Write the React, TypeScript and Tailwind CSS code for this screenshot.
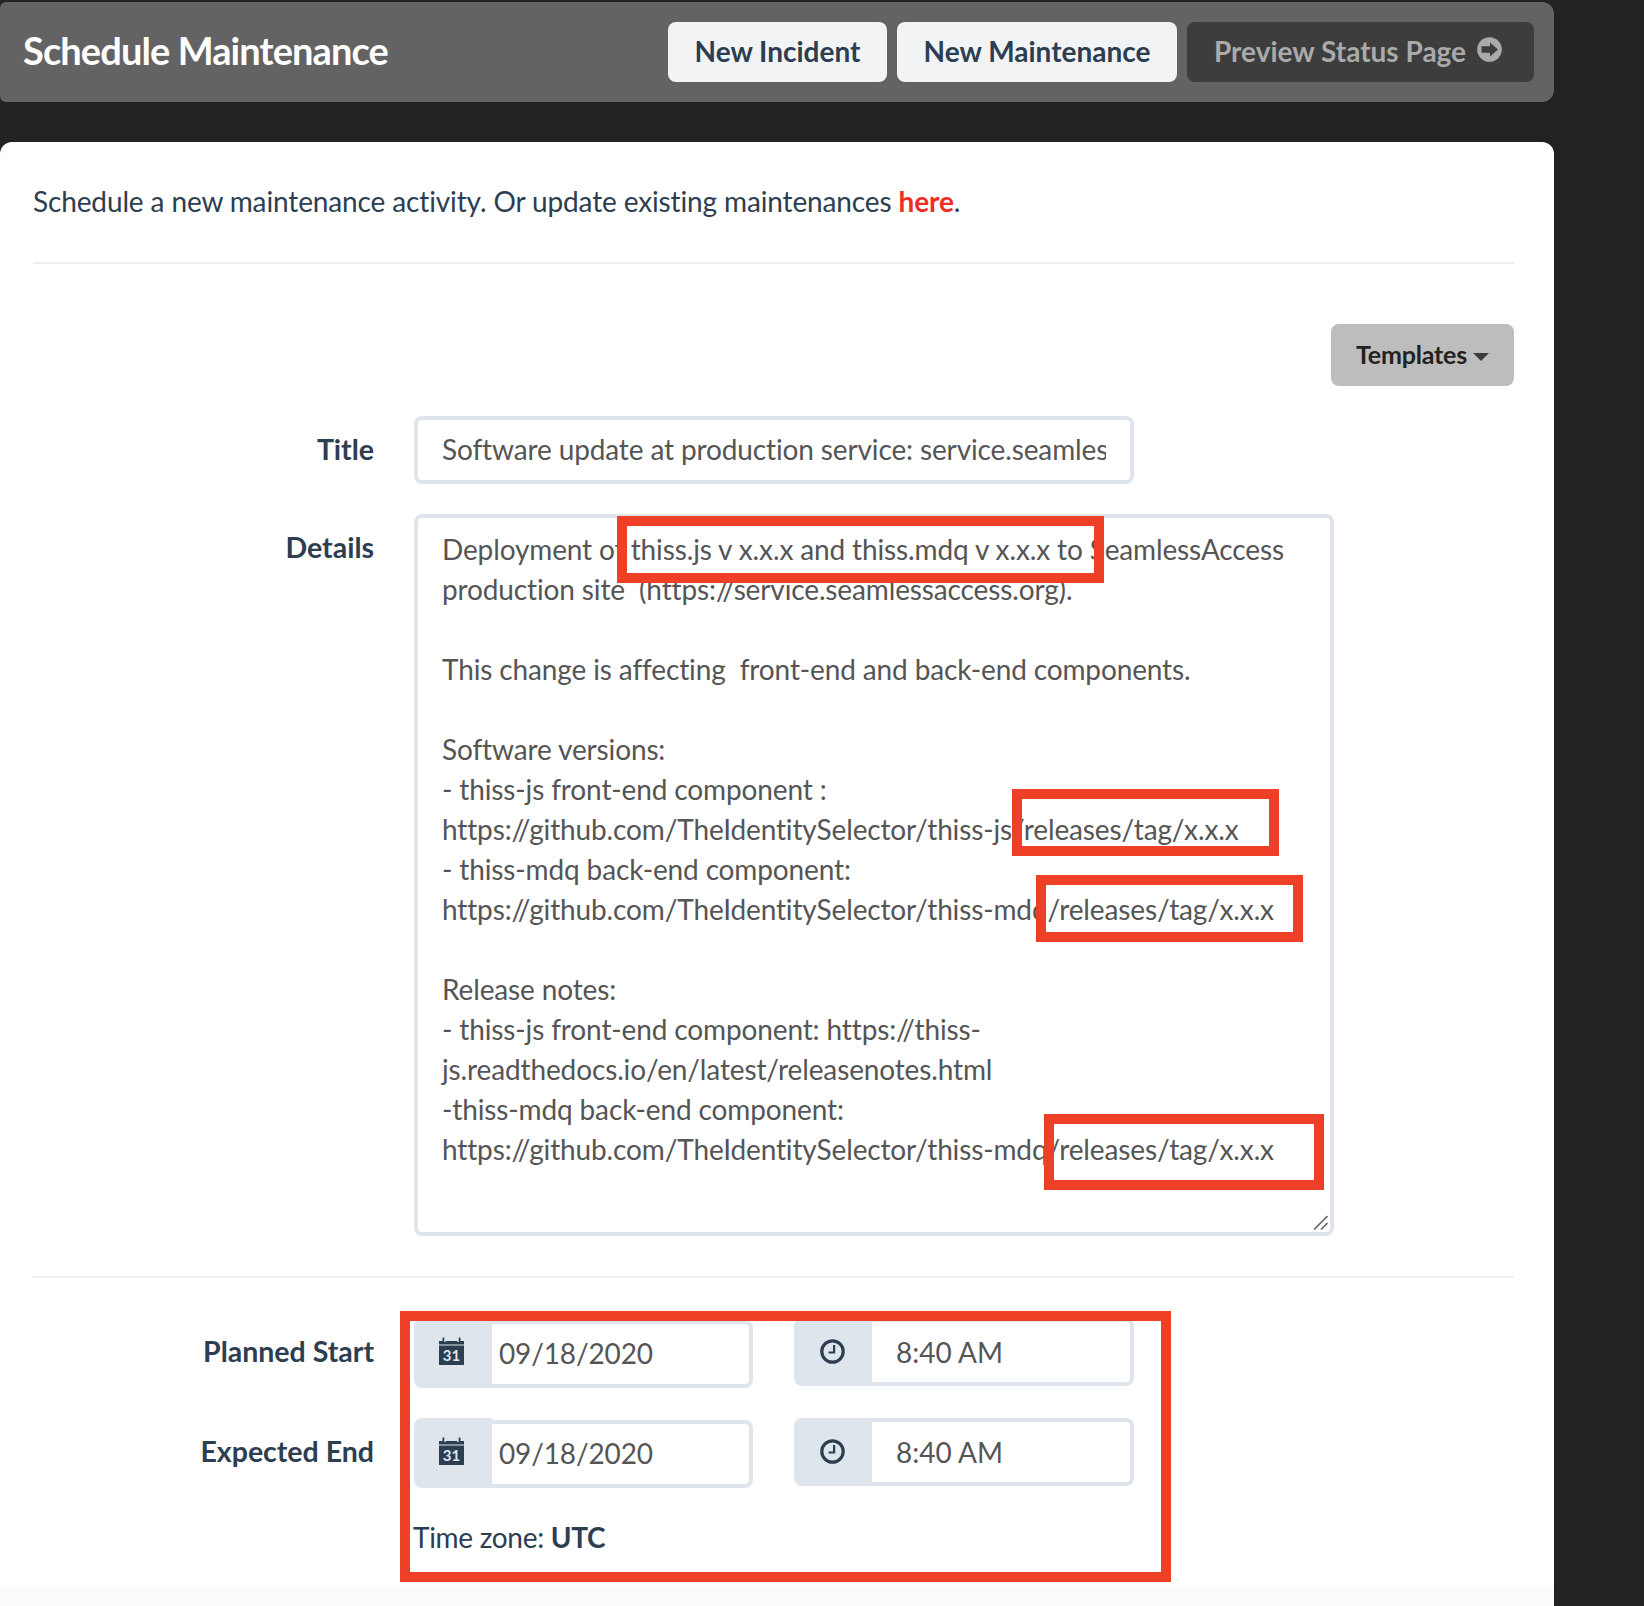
const lato = "font-['Lato','Noto_Sans',sans-serif]";

const details = `Deployment of thiss.js v x.x.x and thiss.mdq v x.x.x to SeamlessAccess production site  (https://service.seamlessaccess.org).

This change is affecting  front-end and back-end components.

Software versions:
- thiss-js front-end component :
https://github.com/TheIdentitySelector/thiss-js/releases/tag/x.x.x
- thiss-mdq back-end component:
https://github.com/TheIdentitySelector/thiss-mdq/releases/tag/x.x.x

Release notes:
- thiss-js front-end component: https://thiss-js.readthedocs.io/en/latest/releasenotes.html
-thiss-mdq back-end component:
https://github.com/TheIdentitySelector/thiss-mdq/releases/tag/x.x.x`;

function CalendarIcon() {
  return (
    <svg width="25" height="28" viewBox="0 0 25 28" aria-hidden="true">
      <path d="M0 4h3.5V0.5h1.8V5h1.4V4h11.6v1h1.4V0.5h1.8V4H25v3.5H0z" fill="#2c3e50" />
      <rect x="0" y="8.5" width="25" height="19.5" fill="#2c3e50" />
      <text x="12.5" y="24" textAnchor="middle" fontSize="15" fontWeight="700" fill="#dee5ed" fontFamily="Lato, sans-serif">31</text>
    </svg>
  );
}

function ClockIcon() {
  return (
    <svg width="25" height="25" viewBox="0 0 25 25" aria-hidden="true">
      <circle cx="12.5" cy="12.5" r="10.7" fill="none" stroke="#2c3e50" strokeWidth="3.2" />
      <path d="M13 6h2.2v8.6H8.6v-2.2H13z" fill="#2c3e50" />
    </svg>
  );
}

function ArrowCircleIcon() {
  return (
    <svg width="25" height="25" viewBox="0 0 25 25" aria-hidden="true">
      <circle cx="12.5" cy="12.5" r="12.3" fill="#aaaaaa" />
      <path d="M4.5 9.2H13V5.5l8 7-8 7v-3.7H4.5z" fill="#3d3d3d" />
    </svg>
  );
}

function DateGroup({ value }: { value: string }) {
  return (
    <div className="flex w-[339px] h-[68px]">
      <div className="w-[78px] h-[70px] self-end shrink-0 flex justify-center pt-[19px] pr-[3px] bg-[#dee5ed] rounded-l-[8px]">
        <CalendarIcon />
      </div>
      <input
        readOnly
        defaultValue={value}
        className="min-w-0 flex-1 h-full pl-[7px] pb-[2px] bg-white border-[4px] border-l-0 border-[#dee5ed] rounded-r-[8px] text-[28px] tracking-[-0.13px] text-[#555555] outline-none"
      />
    </div>
  );
}

function TimeGroup({ value }: { value: string }) {
  return (
    <div className="flex w-[340px] h-[68px] ml-[41px] -mt-[2px]">
      <div className="w-[78px] shrink-0 flex justify-center pt-[21px] pr-[2px] bg-[#dee5ed] rounded-l-[8px]">
        <ClockIcon />
      </div>
      <input
        readOnly
        defaultValue={value}
        className="min-w-0 flex-1 h-full pl-[24px] pb-[1px] bg-white border-[4px] border-l-0 border-[#dee5ed] rounded-r-[8px] text-[28px] text-[#555555] outline-none"
      />
    </div>
  );
}

function RedBox({ className }: { className: string }) {
  return <div className={`absolute border-[10px] border-[#ee4026] pointer-events-none ${className}`} />;
}

export default function App() {
  return (
    <div className={`${lato} relative w-[1644px] h-[1606px] overflow-hidden bg-[#222222] text-[#2c3e50]`}>
      <div className="w-[1554px] pt-[2px]">
        <header className="h-[100px] bg-[#636363] rounded-r-[12px] rounded-l-[6px] flex items-center justify-between pl-[23px] pr-[20px]">
          <h1 className="pb-[4px] text-[38px] leading-[48px] font-bold tracking-[-0.9px] text-white">Schedule Maintenance</h1>
          <div className="flex gap-[10px]">
            <button className="h-[60px] w-[219px] pb-[2px] bg-[#f1f3f5] rounded-[8px] text-[28px] font-bold text-[#2c3e50]">New Incident</button>
            <button className="h-[60px] w-[280px] pb-[2px] bg-[#f1f3f5] rounded-[8px] text-[28px] font-bold text-[#2c3e50]">New Maintenance</button>
            <button className="h-[60px] w-[347px] pb-[2px] pr-[5px] bg-[#3d3d3d] rounded-[8px] text-[28px] font-bold text-[#aaaaaa] flex items-center justify-center gap-[11px]">
              Preview Status Page
              <span className="mb-[4px]"><ArrowCircleIcon /></span>
            </button>
          </div>
        </header>

        <main className="mt-[40px] bg-white rounded-t-[12px] pl-[33px] pr-[40px] pt-[39px]">
          <p className="text-[28px] tracking-[-0.13px] leading-[40px]">
            Schedule a new maintenance activity. Or update existing maintenances{' '}
            <a className="font-bold text-[#ee2e24]">here</a>.
          </p>
          <hr className="mt-[41px] border-0 h-[2px] bg-[#eeeeee]" />

          <div className="mt-[60px] flex justify-end">
            <button className="h-[62px] w-[183px] bg-[#bdbdbd] rounded-[8px] text-[25px] tracking-[-0.2px] font-bold text-[#222222] flex items-center justify-center gap-[6px]">
              Templates
              <span className="mt-[3px] border-x-[8px] border-x-transparent border-t-[8px] border-t-[#3d3d3d]" />
            </button>
          </div>

          <div className="mt-[30px] flex">
            <label className="w-[341px] shrink-0 text-right text-[28.5px] font-bold leading-[66px]">Title</label>
            <input
              readOnly
              defaultValue="Software update at production service: service.seamlessaccess.org"
              className="ml-[40px] w-[720px] h-[68px] px-[24px] pb-[2px] bg-white border-[4px] border-[#dee5ed] rounded-[8px] text-[28px] tracking-[-0.13px] text-[#555555] outline-none"
            />
          </div>

          <div className="mt-[30px] flex">
            <label className="w-[341px] shrink-0 text-right text-[28.5px] font-bold leading-[40px] pt-[13px]">Details</label>
            <div className="relative ml-[40px] w-[920px] h-[722px]">
              <textarea
                readOnly
                defaultValue={details}
                className="block w-full h-full px-[24px] pt-[11px] resize-none overflow-hidden bg-white border-[4px] border-[#dee5ed] rounded-[8px] text-[28px] tracking-[-0.13px] leading-[40px] text-[#555555] outline-none"
              />
              <svg className="absolute right-[6px] bottom-[6px]" width="15" height="15" viewBox="0 0 15 15" aria-hidden="true">
                <path d="M1 14.5L14.5 1M8 14.5L14.5 8" stroke="#666666" strokeWidth="1.6" fill="none" />
              </svg>
            </div>
          </div>

          <hr className="mt-[40px] border-0 h-[2px] bg-[#eeeeee]" />

          <div className="mt-[42px] flex">
            <label className="w-[341px] shrink-0 text-right text-[28.5px] font-bold leading-[40px] pt-[11px]">Planned Start</label>
            <div className="ml-[40px] flex">
              <DateGroup value="09/18/2020" />
              <TimeGroup value="8:40 AM" />
            </div>
          </div>

          <div className="mt-[32px] flex">
            <label className="w-[341px] shrink-0 text-right text-[28.5px] font-bold leading-[40px] pt-[11px]">Expected End</label>
            <div className="ml-[40px] flex">
              <DateGroup value="09/18/2020" />
              <TimeGroup value="8:40 AM" />
            </div>
          </div>

          <p className="mt-[29px] ml-[380px] text-[28px] tracking-[-0.3px] leading-[40px]">
            Time zone: <strong className="font-bold">UTC</strong>
          </p>

          <footer className="mt-[29px] -ml-[33px] -mr-[40px] h-[40px] bg-[#fbfbfb]" />
        </main>
      </div>

      <RedBox className="left-[617px] top-[516px] w-[487px] h-[67px]" />
      <RedBox className="left-[1012px] top-[789px] w-[267px] h-[67px]" />
      <RedBox className="left-[1036px] top-[875px] w-[267px] h-[67px]" />
      <RedBox className="left-[1044px] top-[1114px] w-[280px] h-[76px]" />
      <RedBox className="left-[400px] top-[1311px] w-[771px] h-[271px]" />
    </div>
  );
}
